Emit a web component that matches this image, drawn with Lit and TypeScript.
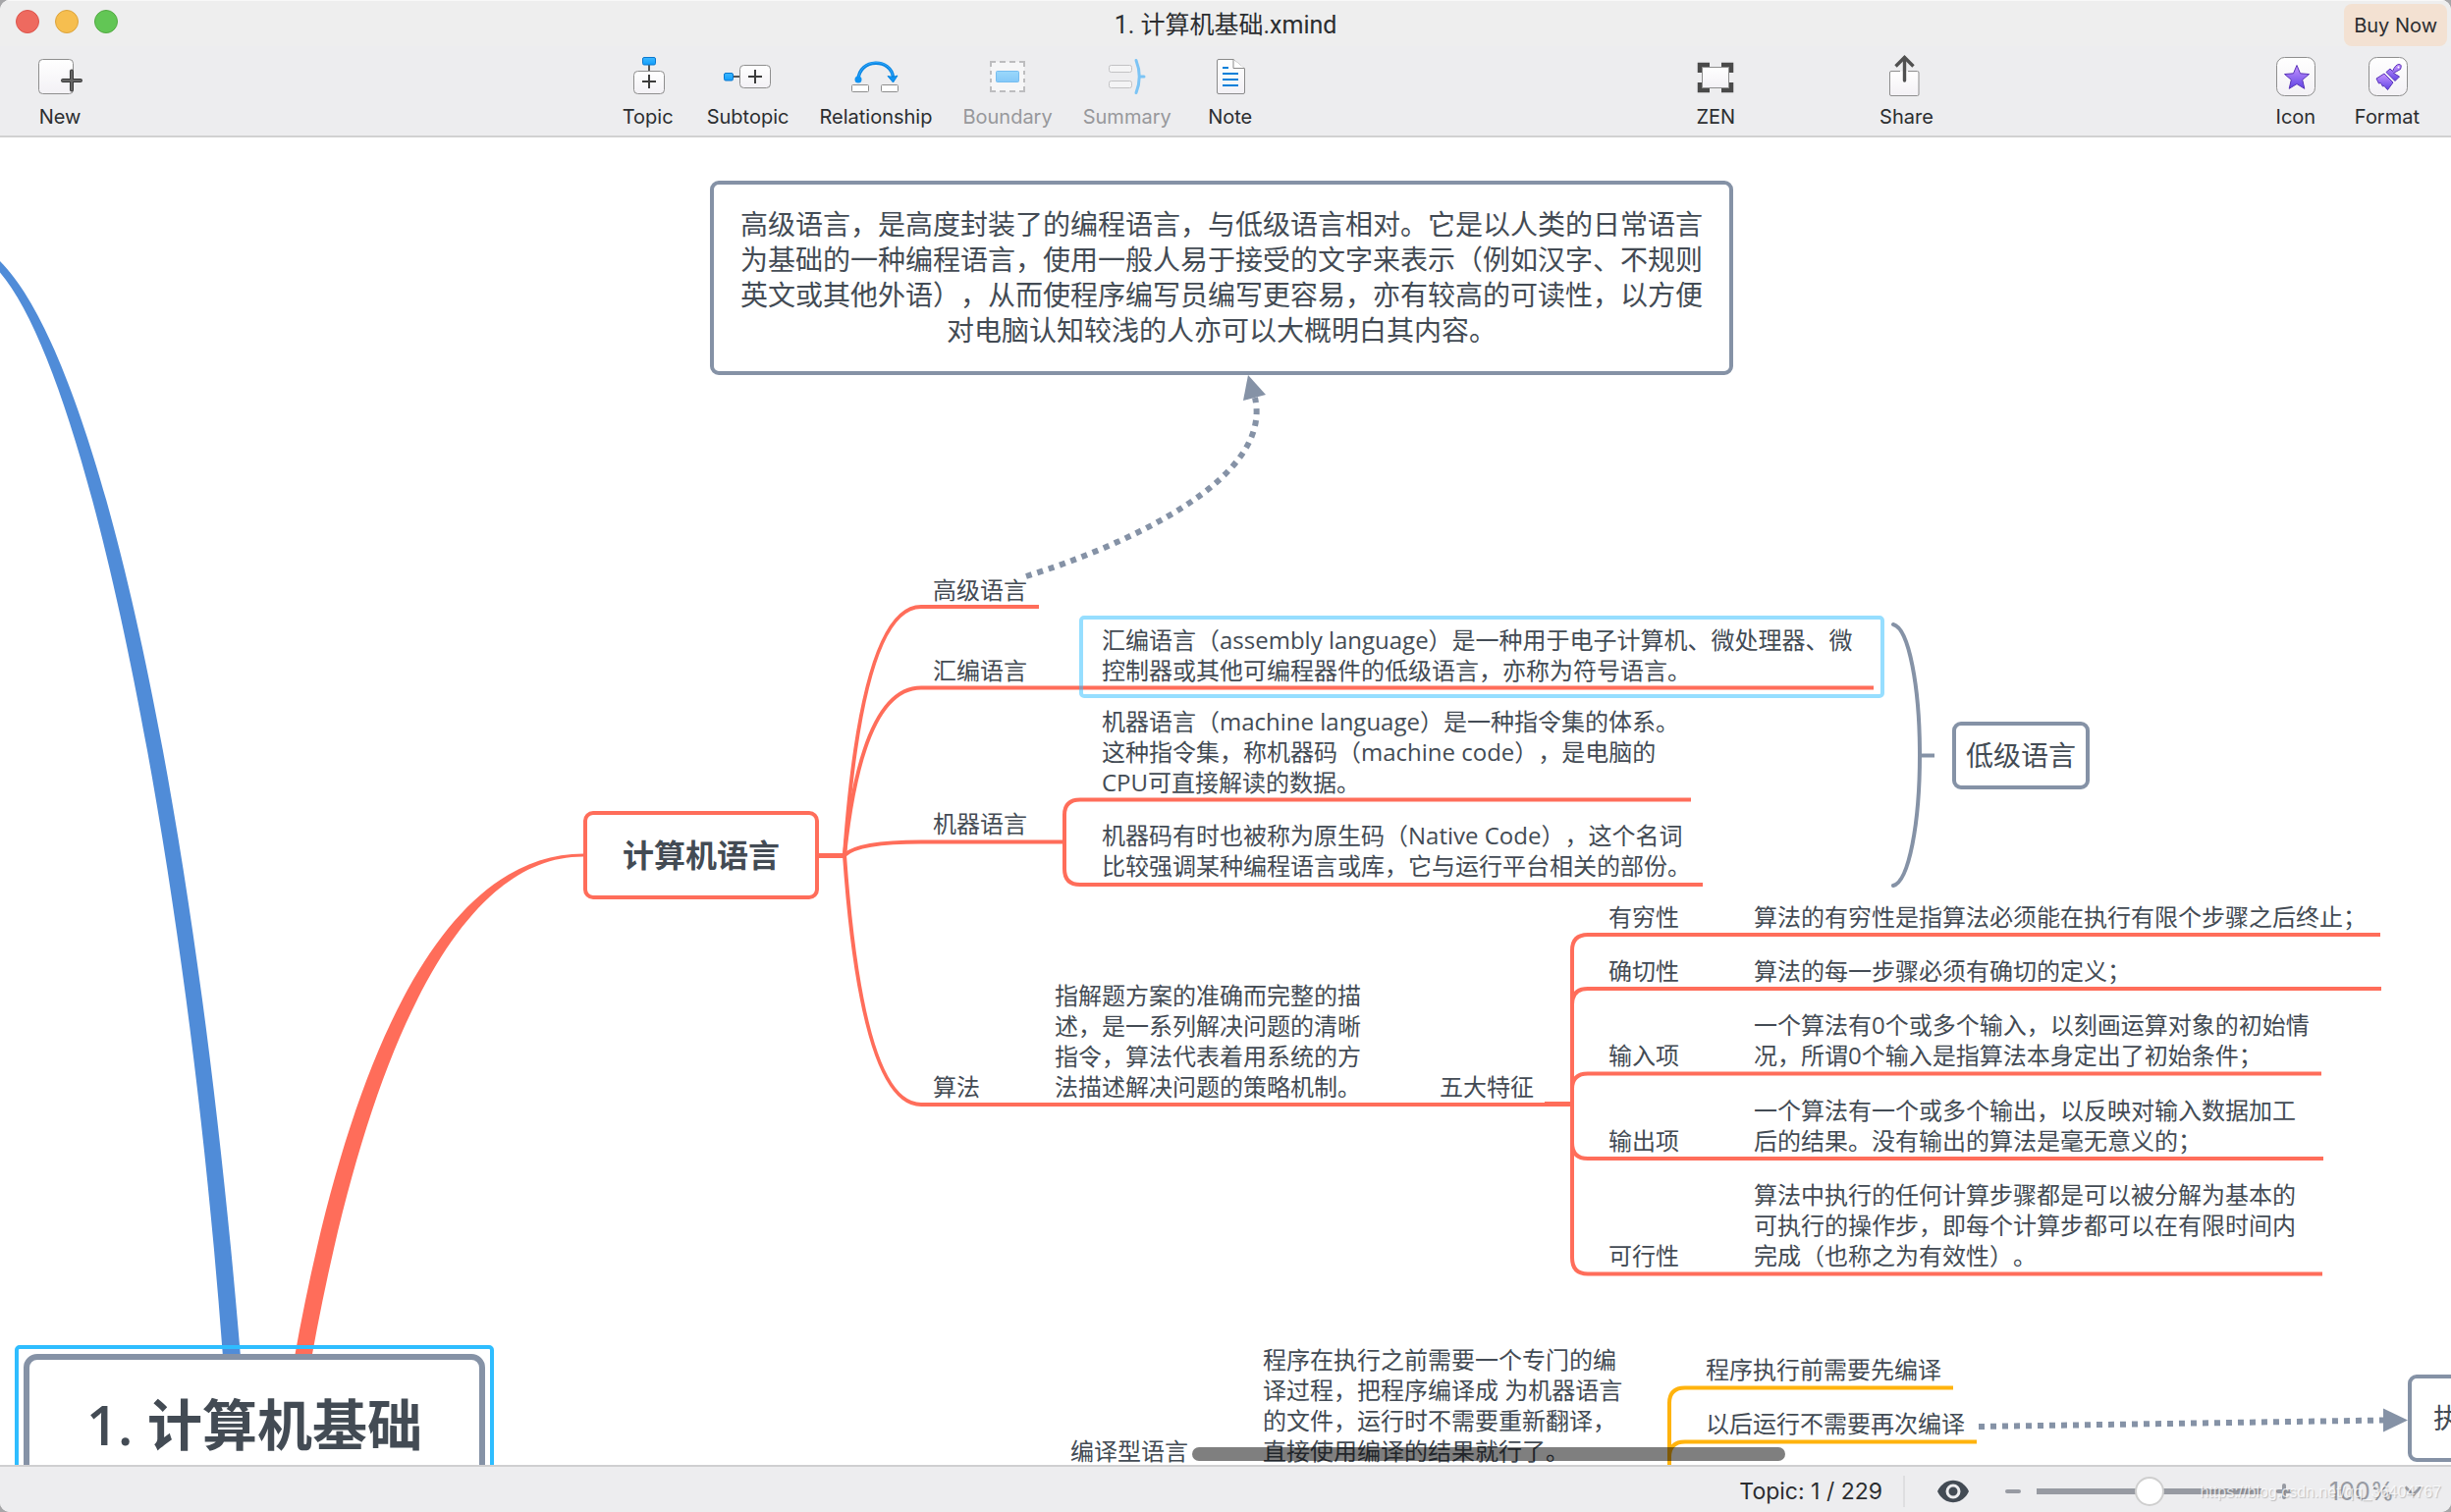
import { LitElement, html, svg, css, TemplateResult, SVGTemplateResult } from "lit";
import { customElement, state } from "lit/decorators.js";
import { classMap } from "lit/directives/class-map.js";
import { styleMap } from "lit/directives/style-map.js";

/** Vertical scroll origin of the map inside the canvas viewport. */
const ORIGIN_Y = 140;

interface MapText {
  x: number;
  y: number;
  lines: string[];
}

interface MapBox extends MapText {
  w: number;
  h: number;
  kind: string;
}

const TOPICS: MapText[] = [
  { x: 950, y: 585, lines: ["高级语言"] },
  { x: 950, y: 667, lines: ["汇编语言"] },
  {
    x: 1122,
    y: 636,
    lines: [
      "汇编语言（assembly language）是一种用于电子计算机、微处理器、微",
      "控制器或其他可编程器件的低级语言，亦称为符号语言。",
    ],
  },
  { x: 950, y: 823, lines: ["机器语言"] },
  {
    x: 1122,
    y: 719,
    lines: [
      "机器语言（machine language）是一种指令集的体系。",
      "这种指令集，称机器码（machine code），是电脑的",
      "CPU可直接解读的数据。",
    ],
  },
  {
    x: 1122,
    y: 835,
    lines: [
      "机器码有时也被称为原生码（Native Code），这个名词",
      "比较强调某种编程语言或库，它与运行平台相关的部份。",
    ],
  },
  { x: 950, y: 1091, lines: ["算法"] },
  {
    x: 1074,
    y: 998,
    lines: [
      "指解题方案的准确而完整的描",
      "述，是一系列解决问题的清晰",
      "指令，算法代表着用系统的方",
      "法描述解决问题的策略机制。",
    ],
  },
  { x: 1466, y: 1091, lines: ["五大特征"] },
  { x: 1638, y: 918, lines: ["有穷性"] },
  { x: 1638, y: 973, lines: ["确切性"] },
  { x: 1638, y: 1059, lines: ["输入项"] },
  { x: 1638, y: 1146, lines: ["输出项"] },
  { x: 1638, y: 1263, lines: ["可行性"] },
  { x: 1786, y: 918, lines: ["算法的有穷性是指算法必须能在执行有限个步骤之后终止；"] },
  { x: 1786, y: 973, lines: ["算法的每一步骤必须有确切的定义；"] },
  {
    x: 1786,
    y: 1028,
    lines: ["一个算法有0个或多个输入，以刻画运算对象的初始情", "况，所谓0个输入是指算法本身定出了初始条件；"],
  },
  {
    x: 1786,
    y: 1115,
    lines: ["一个算法有一个或多个输出，以反映对输入数据加工", "后的结果。没有输出的算法是毫无意义的；"],
  },
  {
    x: 1786,
    y: 1201,
    lines: [
      "算法中执行的任何计算步骤都是可以被分解为基本的",
      "可执行的操作步，即每个计算步都可以在有限时间内",
      "完成（也称之为有效性）。",
    ],
  },
  { x: 1090, y: 1462, lines: ["编译型语言"] },
  {
    x: 1286,
    y: 1369,
    lines: [
      "程序在执行之前需要一个专门的编",
      "译过程，把程序编译成 为机器语言",
      "的文件，运行时不需要重新翻译，",
      "直接使用编译的结果就行了。",
    ],
  },
  { x: 1737, y: 1379, lines: ["程序执行前需要先编译"] },
  { x: 1737, y: 1434, lines: ["以后运行不需要再次编译"] },
];

const BOXES: MapBox[] = [
  {
    kind: "floating",
    x: 723,
    y: 184,
    w: 1042,
    h: 198,
    lines: [
      "高级语言，是高度封装了的编程语言，与低级语言相对。它是以人类的日常语言",
      "为基础的一种编程语言，使用一般人易于接受的文字来表示（例如汉字、不规则",
      "英文或其他外语），从而使程序编写员编写更容易，亦有较高的可读性，以方便",
      "对电脑认知较浅的人亦可以大概明白其内容。",
    ],
  },
  { kind: "floating", x: 1988, y: 735, w: 140, h: 69, lines: ["低级语言"] },
  { kind: "floating edge", x: 2452, y: 1400, w: 240, h: 89, lines: ["执"] },
  { kind: "main", x: 594, y: 826, w: 240, h: 90, lines: ["计算机语言"] },
  { kind: "central", x: 24, y: 1379, w: 470, h: 150, lines: ["1. 计算机基础"] },
];

const plus = (x: number, y: number) => svg`
  <path d="M${x - 7} ${y}H${x + 7}M${x} ${y - 7}V${y + 7}" stroke="#3c3c3c" stroke-width="2" fill="none" />`;

interface Tool {
  label: string;
  disabled?: boolean;
  art: SVGTemplateResult;
}

const TOOLS: Record<string, Tool> = {
  new: {
    label: "New",
    art: svg`
      <rect x="7.500" y="4.500" width="35" height="35" rx="4" fill="url(#paper)" stroke="#8e8e8e" />
      <path d="M31 26H52M41 15.500V36.500" stroke="#eeeef0" stroke-width="7" />
      <path d="M32 26H50M41 16.500V35.500" stroke="#3a3a3a" stroke-width="4" stroke-linecap="round" />
      <path d="M32 26H50M41 16.500V35.500" stroke="#666" stroke-width="2" stroke-linecap="round" />`,
  },
  topic: {
    label: "Topic",
    art: svg`
      <path d="M30 9V17" stroke="#555" stroke-width="2" />
      <rect x="23.500" y="2.500" width="13" height="7.500" rx="1.500" fill="url(#azure)" stroke="#0a78cf" />
      <rect x="14.500" y="16.500" width="31" height="23" rx="4" fill="url(#paper)" stroke="#8e8e8e" />${plus(30, 27)}`,
  },
  subtopic: {
    label: "Subtopic",
    art: svg`
      <path d="M13 22H21" stroke="#555" stroke-width="2" />
      <rect x="4.500" y="18.500" width="9" height="7.500" rx="1.500" fill="url(#azure)" stroke="#0a78cf" />
      <rect x="20.500" y="10.500" width="31" height="23" rx="4" fill="url(#paper)" stroke="#8e8e8e" />${plus(36, 22)}`,
  },
  relationship: {
    label: "Relationship",
    art: svg`
      <path d="M11 25C12 3 45 3 46.500 23" stroke="#0a86e2" stroke-width="3.400" fill="none" />
      <path d="M11.500 22C15 3 43 3 46 21" stroke="#35aaff" stroke-width="1" fill="none" />
      <circle cx="11" cy="25" r="3.500" fill="#0f93f2" />
      <path d="M41 21.500L46.500 28L51 21L46.500 22.500Z" fill="#0f93f2" stroke="#0a86e2" stroke-linejoin="round" />
      <rect x="4.500" y="30.500" width="17" height="7" rx="1" fill="#fff" stroke="#8e8e8e" />
      <rect x="34.500" y="30.500" width="17" height="7" rx="1" fill="#fff" stroke="#8e8e8e" />`,
  },
  boundary: {
    label: "Boundary",
    disabled: true,
    art: svg`
      <rect x="12" y="7" width="34" height="30" fill="#f6f6f7" />
      <path d="M12 12V7H17M21 7H27M31 7H37M41 7H46V12M46 16V20M46 24V28M46 32V37H41M37 37H31M27 37H21M17 37H12V32M12 28V24M12 20V16" stroke="#bdbdbf" stroke-width="2" fill="none" />
      <rect x="17.500" y="16.500" width="23" height="11" rx="1" fill="url(#pale)" stroke="#76bdf0" />`,
  },
  summary: {
    label: "Summary",
    disabled: true,
    art: svg`
      <rect x="10.500" y="10.500" width="23" height="7" rx="2" fill="#f4f4f5" stroke="#c2c2c4" />
      <rect x="10.500" y="26.500" width="23" height="7" rx="2" fill="#f4f4f5" stroke="#c2c2c4" />
      <path d="M38 5.500Q44.500 22 38 38.500M41.500 22H46" stroke="#7cc4f5" stroke-width="3" fill="none" stroke-linecap="round" />`,
  },
  note: {
    label: "Note",
    art: svg`
      <path d="M17 4.500H32L43.500 14V38Q43.500 39.500 42 39.500H17Q15.500 39.500 15.500 38V6Q15.500 4.500 17 4.500Z" fill="url(#paper)" stroke="#8a8a8a" />
      <path d="M32 4.500V13.500H43.500" fill="#fff" stroke="#8a8a8a" />
      <path d="M21 13H27M21 19H37M21 25H37M21 31H37" stroke="#007fd9" stroke-width="2" />`,
  },
  zen: {
    label: "ZEN",
    art: svg`
      <path d="M13 18V10H23M35 10H45V18M45 28V36H35M23 36H13V28" fill="none" stroke="#4a4a4a" stroke-width="4.500" />
      <rect x="15.500" y="12.500" width="27" height="21" fill="url(#paper)" stroke="#8e8e8e" />`,
  },
  share: {
    label: "Share",
    art: svg`
      <path d="M23 16.500H14Q12.500 16.500 12.500 18V40Q12.500 41.500 14 41.500H40.500Q42 41.500 42 40V18Q42 16.500 40.500 16.500H31" fill="url(#paper)" stroke="#8e8e8e" />
      <path d="M27.500 3V26" stroke="#505050" stroke-width="3.400" stroke-linecap="round" />
      <path d="M18.500 11.500L27.500 2.500L36.500 11.500" stroke="#505050" stroke-width="3.400" fill="none" />`,
  },
  icon: {
    label: "Icon",
    art: svg`
      <rect x="9.500" y="2.500" width="39" height="39" rx="8" fill="url(#paper)" stroke="#8e8e8e" />
      <path d="M30 10.500L33.500 18.800L42.500 19.500L35.700 25.300L37.800 34.300L30 29.500L22.200 34.300L24.300 25.300L17.500 19.500L26.500 18.800Z" fill="url(#violet)" stroke="#5a34b8" />`,
  },
  format: {
    label: "Format",
    art: svg`
      <rect x="10.500" y="2.500" width="39" height="39" rx="8" fill="url(#paper)" stroke="#8e8e8e" />
      <path d="M28 17.500L37 26.500L41.500 22L35.500 18.500L42.500 14.500Q44.500 9.500 41 9.500Q37.500 9.500 34.500 16.500L32 14Z" fill="url(#violet)" stroke="#5a34b8" stroke-linejoin="round" />
      <path d="M26 19L35 28L29.500 35.500L26 31.500L24.500 32L22.500 28.500L20.500 29L18 24Z" fill="url(#violet)" stroke="#5a34b8" stroke-linejoin="round" />
      <circle cx="40.500" cy="12.500" r="1" fill="#fff" />`,
  },
};

@customElement("app-root")
export class AppRoot extends LitElement {
  @state() private zoom = 50;

  static styles = css`
    :host {
      display: block;
      height: 100vh;
      background: #a6a6a8;
      font-family: Inter, Roboto, "Noto Sans CJK SC", sans-serif;
      color: #2b2d30;
    }
    .window {
      display: flex;
      flex-direction: column;
      height: 100%;
      border-radius: 10px;
      overflow: hidden;
      background: #fff;
    }
    button,
    select {
      font: inherit;
      color: inherit;
      border: 0;
      background: none;
      padding: 0;
      margin: 0;
    }
    .titlebar {
      display: grid;
      grid-template-columns: 1fr auto 1fr;
      align-items: center;
      height: 46px;
      background: #eeeeee;
      border-top: 1px solid #f8f8f8;
    }
    .lights {
      display: flex;
      gap: 16px;
      padding: 0 0 4px 16px;
    }
    .light {
      width: 24px;
      height: 24px;
      border-radius: 50%;
      border: 1px solid;
    }
    .close {
      background: #ee6a5f;
      border-color: #dc544c;
    }
    .minimise {
      background: #f6be4f;
      border-color: #dba33c;
    }
    .maximise {
      background: #62c655;
      border-color: #53a943;
    }
    .title {
      margin: 0;
      padding-top: 4px;
      font: 400 25px/32px Roboto, "Noto Sans CJK SC", sans-serif;
    }
    .buy {
      justify-self: end;
      align-self: end;
      height: 43px;
      margin-right: 4px;
      padding: 0 10px;
      border-radius: 8px;
      background: #f3e1d2;
      font-size: 20px;
    }
    .toolbar {
      display: flex;
      height: 91px;
      padding: 9px 32px 0;
      box-sizing: border-box;
      background: #ededef;
    }
    .head {
      flex: none;
      border-bottom: 2px solid #d1d1d1;
    }
    .group {
      display: flex;
      gap: 31px;
    }
    .gap-a {
      flex: 270 1 0;
    }
    .gap-b {
      flex: 218 1 0;
    }
    .gap-c {
      flex: 68 1 0;
    }
    .gap-d {
      flex: 169 1 0;
    }
    .tool {
      display: flex;
      flex-direction: column;
      align-items: center;
      min-width: 58px;
      font-size: 20px;
      line-height: 24px;
      gap: 7px;
    }
    .tool:disabled {
      color: #97989b;
    }
    .glyph {
      display: block;
      width: 58px;
      height: 44px;
    }
    .canvas {
      position: relative;
      flex: 1;
      min-height: 0;
      overflow: hidden;
      background: #fff;
      color: #434b54;
      font-family: "Open Sans", "Noto Sans", "Noto Sans CJK SC", sans-serif;
      text-spacing-trim: space-all;
      white-space: pre;
    }
    .links {
      position: absolute;
      inset: 0;
      width: 100%;
      height: 100%;
    }
    .topic {
      position: absolute;
      font-size: 24px;
      line-height: 31px;
    }
    .line {
      display: block;
    }
    .box {
      position: absolute;
      box-sizing: border-box;
      display: flex;
      flex-direction: column;
      justify-content: center;
      align-items: center;
      background: #fff;
      border: 4px solid #8592a6;
      border-radius: 9px;
      font-size: 28px;
      line-height: 36px;
    }
    .floating {
      padding-bottom: 2px;
    }
    .edge {
      align-items: flex-start;
      padding-left: 22px;
    }
    .main {
      border-color: #ff6d5a;
      border-radius: 10px;
      font-size: 32px;
      line-height: 42px;
      font-weight: 700;
    }
    .central {
      padding-bottom: 8px;
      border-width: 6px;
      border-radius: 14px;
      font-size: 56px;
      line-height: 74px;
      font-weight: 600;
    }
    .picked {
      position: absolute;
      box-sizing: border-box;
      border: 4px solid #2ebdff;
      border-radius: 5px;
    }
    .hovered {
      border-color: rgba(46, 189, 255, 0.5);
    }
    .scroll {
      position: absolute;
      left: 1214px;
      bottom: 4px;
      width: 604px;
      height: 14px;
      border-radius: 7px;
      background: rgba(0, 0, 0, 0.5);
    }
    .status {
      position: relative;
      flex: none;
      display: flex;
      align-items: center;
      justify-content: flex-end;
      height: 48px;
      box-sizing: border-box;
      padding: 4px 29px 0 0;
      border-top: 2px solid #cfcfd0;
      background: #ededef;
      font-size: 23px;
      line-height: 32px;
    }
    .rule {
      width: 2px;
      height: 32px;
      margin: 0 33px 0 21px;
      background: #dedee0;
    }
    .eye {
      width: 32px;
      height: 24px;
      margin-right: 37px;
    }
    .step {
      width: 16px;
      height: 16px;
    }
    .pic {
      display: block;
      width: 100%;
      height: 100%;
    }
    .slider {
      appearance: none;
      width: 229px;
      height: 30px;
      margin: 0 15px 0 16px;
      background: linear-gradient(#979aa2, #979aa2) center / 100% 6px no-repeat;
      border-radius: 3px;
    }
    .slider::-webkit-slider-thumb {
      appearance: none;
      width: 30px;
      height: 30px;
      border-radius: 50%;
      background: #fff;
      border: 2px solid #cfcfcf;
      box-sizing: border-box;
    }
    .percent {
      position: relative;
      display: flex;
      align-items: center;
      width: 95px;
      margin-left: 38px;
      color: #979aa2;
    }
    .percent select {
      appearance: none;
      width: 100%;
      font-size: 25px;
    }
    .chevron {
      position: absolute;
      right: 0;
      width: 19px;
      height: 12px;
      pointer-events: none;
    }
    .mark {
      position: absolute;
      right: 10px;
      top: 16px;
      font: 16px/20px "Liberation Sans", sans-serif;
      color: rgba(255, 255, 255, 0.75);
      text-shadow: 1px 1px 1px rgba(0, 0, 0, 0.2);
      pointer-events: none;
    }
  `;

  private tool(key: string): TemplateResult {
    const t = TOOLS[key];
    return html`<button class="tool" type="button" ?disabled=${t.disabled}>
      <svg class="glyph" viewBox="0 0 58 44" aria-hidden="true">
        <defs>
          <linearGradient id="paper" x1="0" y1="0" x2="0" y2="1">
            <stop offset="0" stop-color="#fff" />
            <stop offset="1" stop-color="#f3f1f5" />
          </linearGradient>
          <linearGradient id="azure" x1="0" y1="0" x2="0" y2="1">
            <stop offset="0" stop-color="#3db8ff" />
            <stop offset="1" stop-color="#119dfb" />
          </linearGradient>
          <linearGradient id="pale" x1="0" y1="0" x2="0" y2="1">
            <stop offset="0" stop-color="#9bd8fb" />
            <stop offset="1" stop-color="#84c8f8" />
          </linearGradient>
          <linearGradient id="violet" x1="0" y1="0" x2="0" y2="1">
            <stop offset="0" stop-color="#c795ff" />
            <stop offset="1" stop-color="#6044e4" />
          </linearGradient>
        </defs>
        ${t.art}
      </svg>
      <span>${t.label}</span>
    </button>`;
  }

  private place(x: number, y: number, w?: number, h?: number) {
    const at: Record<string, string> = { left: `${x}px`, top: `${y - ORIGIN_Y}px` };
    if (w) at.width = `${w}px`;
    if (h) at.height = `${h}px`;
    return styleMap(at);
  }

  private links(): TemplateResult {
    return html`<svg class="links" aria-hidden="true">
      <g transform="translate(0 ${-ORIGIN_Y})" fill="none" stroke-width="4">
        <path
          d="M0 266C104 370 200 835 245 1382H227C190 880 92 385 0 277.500Z"
          fill="#508cd8"
        />
        <path
          d="M300 1382C355 1075 450 870 594 869.500V872.500C460 872 370 1090 317.500 1382Z"
          fill="#ff6d5a"
        />
        <g stroke="#ff6d5a">
          <path d="M834 871.500H861" stroke-width="5" />
          <path d="M860 871Q878 618 938 618H1058" />
          <path d="M860 871Q878 700.500 938 700.500H1908" />
          <path d="M860 871Q874 857.500 938 857.500H1084" />
          <path d="M860 871Q878 1125 938 1125H1573" />
          <path d="M1722 814.500H1100Q1084 814.500 1084 830V885Q1084 901 1100 901H1734" />
          <path d="M1573 1124.500H1601" stroke-width="5" />
          <path d="M2424 952H1617Q1601 952 1601 968V1281Q1601 1297.500 1617 1297.500H2365" />
          <path d="M2425 1007H1617Q1601 1007 1601 1023" />
          <path d="M2364 1093.500H1617Q1601 1093.500 1601 1109" />
          <path d="M2366 1180H1617Q1601 1180 1601 1164" />
        </g>
        <g stroke="#ffb30d">
          <path d="M1989 1413.500H1716Q1700 1413.500 1700 1429V1500" />
          <path d="M2013 1468.500H1716Q1700 1468.500 1700 1484" />
        </g>
        <g stroke="#8592a6">
          <path d="M1928 636C1944 640 1955 700 1955 769S1944 898 1928 902" stroke-linecap="round" />
          <path d="M1955 769.500H1970" />
          <path d="M1045 587C1147 555 1297 488 1278 405" stroke-width="6" stroke-dasharray="6 6" />
          <path d="M2015 1453L2428 1446.500" stroke-width="6" stroke-dasharray="6 6" />
        </g>
        <path d="M1271 382L1289 402L1266 408Z" fill="#8592a6" />
        <path d="M2452 1446.500L2427 1434.500V1458.500Z" fill="#8592a6" />
      </g>
    </svg>`;
  }

  private lines(text: string[]) {
    return text.map((t) => html`<span class="line">${t}</span>`);
  }

  render() {
    return html`<div class="window">
      <header class="head">
        <div class="titlebar">
          <div class="lights">
            <button class="light close" type="button" aria-label="Close"></button>
            <button class="light minimise" type="button" aria-label="Minimise"></button>
            <button class="light maximise" type="button" aria-label="Maximise"></button>
          </div>
          <h1 class="title">1. 计算机基础.xmind</h1>
          <button class="buy" type="button">Buy Now</button>
        </div>
        <nav class="toolbar">
          ${this.tool("new")}
          <span class="gap-a"></span>
          <div class="group">
            ${["topic", "subtopic", "relationship", "boundary", "summary", "note"].map((k) => this.tool(k))}
          </div>
          <span class="gap-b"></span>
          ${this.tool("zen")}
          <span class="gap-c"></span>
          ${this.tool("share")}
          <span class="gap-d"></span>
          <div class="group">${this.tool("icon")}${this.tool("format")}</div>
        </nav>
      </header>

      <main class="canvas">${this.links()}${TOPICS.map(
        (t) => html`<div class="topic" style=${this.place(t.x, t.y)}>${this.lines(t.lines)}</div>`,
      )}${BOXES.map((b) => {
        const kinds = Object.fromEntries(b.kind.split(" ").map((k) => [k, true]));
        return html`<div class=${classMap({ box: true, ...kinds })} style=${this.place(b.x, b.y, b.w, b.h)}>${this.lines(b.lines)}</div>`;
      })}<div class="picked hovered" style=${this.place(1099, 627, 820, 84)}></div
        ><div class="picked" style=${this.place(15, 1370, 488, 168)}></div
        ><div class="scroll"></div></main>

      <footer class="status">
        <span>Topic: 1 / 229</span>
        <span class="rule"></span>
        <button class="eye" type="button" aria-label="Show">
          <svg class="pic" viewBox="0 0 32 24">
            <path d="M0 12C7 -3 25 -3 32 12C25 27 7 27 0 12Z" fill="#434b54" />
            <circle cx="16" cy="12" r="6" fill="#434b54" stroke="#ededef" stroke-width="3" />
          </svg>
        </button>
        <button class="step" type="button" aria-label="Zoom out">
          <svg class="pic" viewBox="0 0 16 16"><path d="M2 8H14" stroke="#979aa2" stroke-width="4" stroke-linecap="round" /></svg>
        </button>
        <input
          class="slider"
          type="range"
          aria-label="Zoom"
          min="0"
          max="100"
          .value=${String(this.zoom)}
          @input=${(e: Event) => (this.zoom = Number((e.target as HTMLInputElement).value))}
        />
        <button class="step" type="button" aria-label="Zoom in">
          <svg class="pic" viewBox="0 0 16 16">
            <path d="M2 8H14M8 2V14" stroke="#979aa2" stroke-width="4" stroke-linecap="round" />
          </svg>
        </button>
        <label class="percent">
          <select aria-label="Zoom level">
            <option>100%</option>
          </select>
          <svg class="chevron" viewBox="0 0 19 12" aria-hidden="true">
            <path d="M1.500 1.500L9.500 9.500L17.500 1.500" fill="none" stroke="#979aa2" stroke-width="3" />
          </svg>
        </label>
        <span class="mark">https://blog.csdn.net/qq_36404767</span>
      </footer>
    </div>`;
  }
}
